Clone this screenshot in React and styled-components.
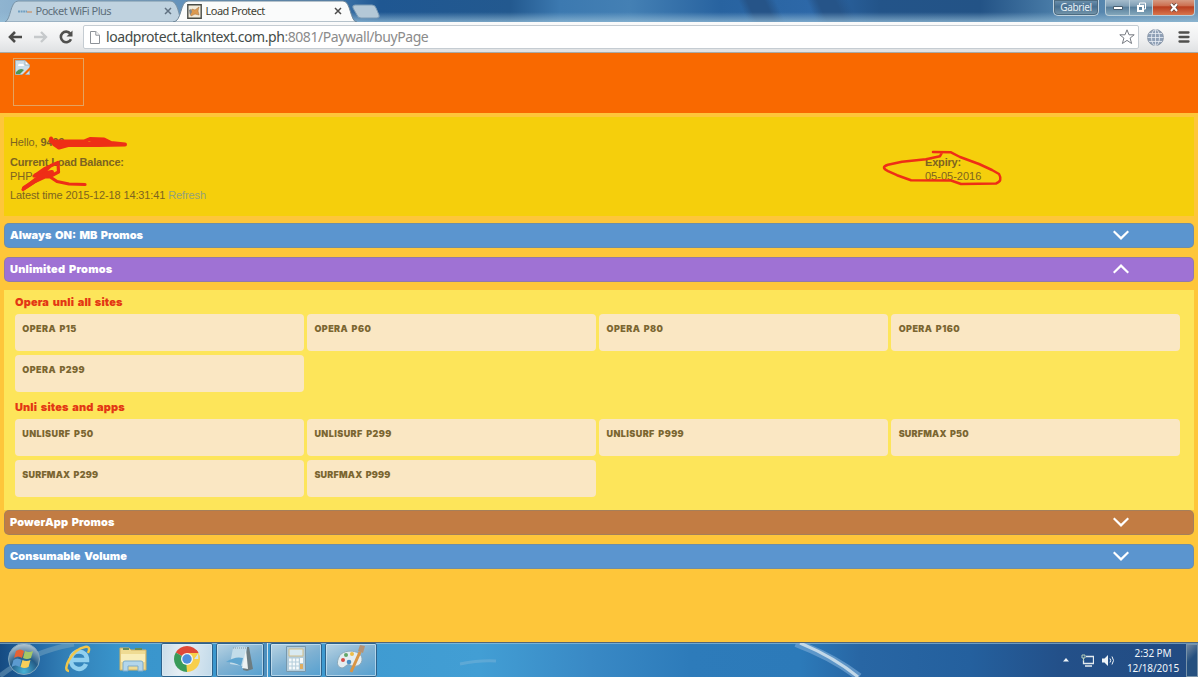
import React from 'react';
import styled, { css, createGlobalStyle } from 'styled-components';

const GlobalStyle = createGlobalStyle`
  * { box-sizing: border-box; }
  body {
    margin: 0;
    overflow: hidden;
    font-family: "Liberation Sans", Arial, sans-serif;
  }
  svg { display: block; flex: none; }
`;

const Screen = styled.div`
  display: flex;
  flex-direction: column;
  width: 1198px;
  height: 677px;
  background: #fec63a;
`;

/* browser */

const TabStrip = styled.header`
  position: relative;
  display: flex;
  height: 22px;
  background:
    linear-gradient(to bottom, transparent 55%, rgba(150, 190, 215, .75) 100%),
    linear-gradient(65deg, transparent 0 678px, #265488 686px 702px, transparent 712px 740px, #265488 750px 766px, transparent 778px),
    linear-gradient(to right, #8fb4d0 0, #3d74a8 340px, #1f5792 380px, #23598f 510px, #3c79b0 560px, #4480b4 630px, #2863a0 720px, #2d68a8 810px, #235489 880px, #235386 980px, #4c7faa 1060px, #6e97b8 1198px);
`;

const TabShape = styled.svg`
  position: absolute;
  left: 0;
  top: 0;
`;

const Tab = styled.div`
  position: relative;
  display: flex;
  align-items: center;
  width: ${({ width }) => width}px;
  height: 22px;
  padding: 0 ${({ end }) => end}px 0 ${({ start }) => start}px;
  font: 11px/22px "Noto Sans", "Open Sans", sans-serif;
  color: ${({ active }) => (active ? '#3f3f35' : '#5d6e7a')};
  svg:last-child { margin-left: auto; }
`;

const TabTitle = styled.span`
  margin-left: ${({ gap }) => gap}px;
  letter-spacing: -.5px;
  white-space: nowrap;
`;

const WindowControls = styled.div`
  display: flex;
  align-items: flex-start;
  margin-left: auto;
  padding-right: 3px;
`;

const UserButton = styled.div`
  width: 46px;
  height: 16px;
  margin-right: 6px;
  border: 1px solid #c0d3df;
  border-top: 0;
  border-radius: 0 0 5px 5px;
  background: linear-gradient(#6f93ae, #476f91 45%, #7798ac);
  box-shadow: inset 0 0 0 1px #4d6b80;
  color: #e8f0f5;
  font: 10px/15px "Noto Sans", sans-serif;
  letter-spacing: -.35px;
  text-align: center;
`;

const WindowButton = styled.div`
  display: flex;
  align-items: center;
  justify-content: center;
  width: ${({ width }) => width}px;
  height: 16px;
  border: 1px solid #b9ced9;
  border-top: 0;
  border-left-width: ${({ first }) => (first ? 1 : 0)}px;
  border-radius: 0 0 ${({ last }) => (last ? 4 : 0)}px ${({ first }) => (first ? 4 : 0)}px;
  background: ${({ last }) => (last
    ? 'linear-gradient(#d69a82, #cc6d4e 40%, #b93d1e 45%, #d8754c)'
    : 'linear-gradient(#a5bccc, #7f9eb5 42%, #577d9a 46%, #83a7bb)')};
`;

const Toolbar = styled.div`
  display: flex;
  align-items: center;
  height: 31px;
  padding: 0 7px 0 8px;
  border-bottom: 1px solid #a9aaa5;
  background: linear-gradient(#fbfbfb, #eeeff0 60%, #dfe1e3);
`;

const Icon = styled.svg`
  margin: 0 ${({ $after = 0 }) => $after}px 0 ${({ $before = 0 }) => $before}px;
`;

const AddressBar = styled.div`
  display: flex;
  align-items: center;
  width: 1056px;
  height: 24px;
  padding: 0 3px 0 6px;
  border: 1px solid #c5ccd2;
  border-radius: 2px;
  background: #fff;
`;

const Url = styled.div`
  flex: 1;
  margin-left: 6px;
  color: #8b8b8b;
  font: 14px/20px "Noto Sans", "Open Sans", sans-serif;
  letter-spacing: -.43px;
  white-space: nowrap;
  b {
    color: #444b48;
    font-weight: 400;
  }
`;

/* page */

const Banner = styled.div`
  height: 60px;
  padding: 5px 13px;
  background: #f96900;
`;

const MissingImage = styled.div`
  width: 71px;
  height: 48px;
  padding: 1px;
  border: 1px solid #e5a35f;
`;

const Page = styled.main`
  flex: 1;
  padding: 4px 4px 0;
`;

const Balance = styled.section`
  position: relative;
  display: flex;
  height: 99px;
  padding: 18px 0 0 6px;
  background: #f5cf0c;
  color: #7d6420;
  font-size: 11px;
  line-height: 14px;
`;

const Account = styled.div`
  width: 915px;
`;

const Line = styled.p`
  margin: 0 0 ${({ gap = 0 }) => gap}px;
  letter-spacing: ${({ spacing = 0 }) => spacing}px;
`;

const Expiry = styled.div`
  padding-top: 20px;
`;

const RefreshLink = styled.a`
  color: #93a17a;
`;

const Markup = styled.svg`
  position: absolute;
  left: 0;
  top: 0;
  fill: none;
  stroke: #ee2e16;
  stroke-linecap: round;
  stroke-linejoin: round;
`;

const tones = {
  blue: '#5b95cf',
  purple: '#9f72d4',
  brown: '#c27c43',
};

const heavy = css`
  font-family: Inter, "Liberation Sans", sans-serif;
  font-weight: 900;
  word-spacing: 1.3px;
`;

const Bar = styled.div`
  ${heavy}
  display: flex;
  align-items: center;
  justify-content: space-between;
  height: 25px;
  margin-top: ${({ gap }) => gap}px;
  padding: 0 64px 1px 5px;
  border: 1px solid rgba(130, 130, 120, .45);
  border-radius: 5px;
  background: ${({ tone }) => tones[tone]};
  color: #fff;
  font-size: 11px;
  span { letter-spacing: ${({ spacing }) => spacing}px; }
`;

const Panel = styled.section`
  height: 220px;
  margin-top: 8px;
  padding: 4px 14px 0 11px;
  background: #fde55a;
`;

const GroupTitle = styled.h2`
  ${heavy}
  height: 20px;
  margin: 0;
  color: #e33714;
  font-size: 11px;
  line-height: 16px;
  letter-spacing: .14px;
`;

const Cards = styled.div`
  display: grid;
  grid-template-columns: repeat(4, 1fr);
  gap: 3.5px;
  margin-bottom: 7.5px;
`;

const Card = styled.div`
  ${heavy}
  height: 37px;
  padding: 8px 7.3px;
  border-radius: 4px;
  background: #fae7c3;
  color: #7b6631;
  font-size: 9px;
  line-height: 13px;
  letter-spacing: ${({ spacing }) => spacing}px;
`;

/* taskbar */

const Taskbar = styled.footer`
  position: relative;
  display: flex;
  align-items: center;
  height: 35px;
  border-top: 1px solid #50667a;
  background: linear-gradient(to right, #164b82 0, #2468a3 35px, #327fb6 65px, #3995cc 120px, #429ed4 480px, #3989c5 590px, #2d7bba 690px, #2c7ab9 800px, #2866a4 860px, #24609e 970px, #235089 1060px, #224b82 1198px);
  box-shadow: inset 0 1px 0 rgba(160, 200, 220, .6);
`;

const Streaks = styled.svg`
  position: absolute;
  left: 0;
  top: 0;
`;

const Launcher = styled.div`
  position: relative;
  display: flex;
  justify-content: center;
  width: ${({ width }) => width}px;
  padding-bottom: 2px;
`;

const TaskButton = styled.div`
  position: relative;
  display: flex;
  align-items: center;
  justify-content: center;
  width: ${({ width }) => width}px;
  height: 34px;
  margin: 0 ${({ gap }) => gap}px 0 ${({ before = 0 }) => before}px;
  padding-bottom: 2px;
  border: 1px solid #d3e4ee;
  border-radius: 2px;
  outline: 1px solid #2d628b;
  outline-offset: -1px;
  box-shadow: inset 0 0 0 1px rgba(220, 238, 248, .6);
  background: ${({ active }) => (active
    ? 'linear-gradient(100deg, #c9dce8, #e5eef4 40%, #c1d9e9)'
    : 'linear-gradient(155deg, #b8d3e3, #7fb1d2 50%, #55a0d0)')};
`;

const StackEdge = styled.div`
  position: relative;
  width: 4px;
  height: 34px;
  margin-right: 2px;
  border-right: 1px solid #d3e4ee;
  background: #4e8fbd;
`;

const Tray = styled.div`
  position: relative;
  display: flex;
  align-items: center;
  height: 100%;
  margin-left: auto;
  color: #f1f6fa;
`;

const Clock = styled.div`
  width: 56px;
  margin: 1px 5px 0 10px;
  font: 10px/15px "Noto Sans", "Open Sans", sans-serif;
  letter-spacing: -.1px;
  text-align: center;
  white-space: nowrap;
`;

const ShowDesktop = styled.div`
  width: 12px;
  height: 33px;
  border: 1px solid #7893a9;
  background: linear-gradient(135deg, #7188a0, #25507f 45%);
`;

const CloseIcon = ({ color }) => (
  <svg width="8" height="8" viewBox="0 0 8 8" stroke={color} strokeWidth="1.5">
    <path d="M1 1l6 6M7 1L1 7" />
  </svg>
);

const Chevron = ({ up }) => (
  <svg width="16" height="10" viewBox="0 0 16 10" fill="none" stroke="#fff" strokeWidth="2.2">
    <path d={up ? 'M.7 8.8L8 1.6l7.3 7.2' : 'M.7 1.2L8 8.4l7.3-7.2'} />
  </svg>
);

const BrowserChrome = () => (
  <>
    <TabStrip>
      <TabShape width="400" height="22" viewBox="0 0 400 22">
        <path d="M5 22C11 20 10 1 18 1h152c6 0 8 7 11 21z" fill="#bfd2df" stroke="#7893a7" />
        <path d="M173 22c9 0 7-21 15-21h155c8 0 7 21 14 21z" fill="#fafbfb" stroke="#71899b" />
        <path d="M353 8q-1-3 2-3h17q3 0 4 3l3 7q1 3-2 3h-16q-3 0-4-3z" fill="#b3c8d7" stroke="#7b9bb5" />
      </TabShape>
      <Tab width={182} start={18} end={10}>
        <svg width="15" height="5" viewBox="0 0 15 5">
          <path d="M0 2.5h9" stroke="#719fc1" strokeWidth="2" strokeDasharray="2 .6" />
          <path d="M9 3h5" stroke="#c99d7d" strokeWidth="1.5" />
        </svg>
        <TabTitle gap={2.5}>Pocket WiFi Plus</TabTitle>
        <CloseIcon color="#607181" />
      </Tab>
      <Tab active width={170} start={5} end={10}>
        <svg width="15" height="15" viewBox="0 0 15 15">
          <path d="M.8.8h13.4v13.4H.8z" fill="#f2ead9" stroke="#494c47" strokeWidth="1.4" />
          <path d="M3 9l2-4 3 1 4-3-1 4 1 4-4-1-4 2z" fill="#dc9a50" stroke="#a4713f" strokeWidth=".5" />
          <path d="M2 6l2-1 1 3-2 3z" fill="#7c8891" />
        </svg>
        <TabTitle gap={3.5}>Load Protect</TabTitle>
        <CloseIcon color="#4c4c4c" />
      </Tab>
      <WindowControls>
        <UserButton>Gabriel</UserButton>
        <WindowButton first width={25}>
          <svg width="10" height="4"><path d="M.5 .5h9v3h-9z" fill="#fff" stroke="#495e70" /></svg>
        </WindowButton>
        <WindowButton width={23}>
          <svg width="11" height="11" viewBox="0 0 11 11" fill="none" stroke="#fff">
            <path d="M3.5 3V1h6v6H8" />
            <path d="M2 4h5v5H2z" strokeWidth="2" />
          </svg>
        </WindowButton>
        <WindowButton last width={42}>
          <svg width="10" height="9" viewBox="0 0 10 9">
            <path d="M2 1l6 7M8 1L2 8" stroke="#67483d" strokeWidth="3.6" />
            <path d="M2 1l6 7M8 1L2 8" stroke="#fff" strokeWidth="2" />
          </svg>
        </WindowButton>
      </WindowControls>
    </TabStrip>
    <Toolbar>
      <Icon $after={12} width="14" height="12" viewBox="0 0 14 12" fill="none" stroke="#4b4b49" strokeWidth="2.6">
        <path d="M14 6H2M7 1L2 6l5 5" />
      </Icon>
      <Icon $after={11} width="14" height="12" viewBox="0 0 14 12" fill="none" stroke="#c6c9cb" strokeWidth="2.3">
        <path d="M0 6h12M7 1l5 5-5 5" />
      </Icon>
      <Icon $after={10} width="14" height="14" viewBox="0 0 14 14">
        <path d="M11.3 3.6A5.3 5.3 0 1 0 12 9.2" fill="none" stroke="#50504e" strokeWidth="2.6" />
        <path d="M13.5 .5v6h-6z" fill="#50504e" />
      </Icon>
      <AddressBar>
        <svg width="10" height="13" viewBox="0 0 10 13" fill="#fff" stroke="#8d9298">
          <path d="M.5.5h5.3l3.7 3.7v8.3h-9z" />
          <path d="M5.8.5v3.7h3.7" />
        </svg>
        <Url><b>loadprotect.talkntext.com.ph</b>:8081/Paywall/buyPage</Url>
        <svg width="16" height="16" viewBox="0 0 16 16" fill="#fff" stroke="#777b82" strokeLinejoin="round">
          <path d="M8 .8l2 5h5.2l-4.1 3.3 1.5 5.4L8 11.4l-4.6 3.1 1.5-5.4L.8 5.8H6z" />
        </svg>
      </AddressBar>
      <Icon $before={8} width="17" height="17" viewBox="0 0 17 17" fill="none" stroke="#e8eef5" strokeWidth=".8">
        <circle cx="8.5" cy="8.5" r="8" fill="#8fa0b6" stroke="#8793a3" />
        <ellipse cx="8.5" cy="8.5" rx="4" ry="8" />
        <path d="M8.5.5v16M.5 8.5h16M2 4.5h13M2 12.5h13" />
      </Icon>
      <Icon $before={14} width="12" height="12" viewBox="0 0 12 12" stroke="#50504e" strokeWidth="2.3" strokeLinecap="round">
        <path d="M1.5 1.5h9M1.5 6h9M1.5 10.5h9" />
      </Icon>
    </Toolbar>
  </>
);

const BalanceBox = () => (
  <Balance>
    <Account>
      <Line gap={6} spacing={-0.1}>Hello, <b>9499</b></Line>
      <Line spacing={-0.2}><b>Current Load Balance:</b></Line>
      <Line gap={5}>PHP 0</Line>
      <Line spacing={-0.12}>Latest time 2015-12-18 14:31:41 <RefreshLink>Refresh</RefreshLink></Line>
    </Account>
    <Expiry>
      <Line spacing={-0.18}><b>Expiry:</b></Line>
      <Line>05-05-2016</Line>
    </Expiry>
    <Markup width="1190" height="99" viewBox="4 117 1190 99">
      <path strokeWidth="4" d="M51 138.5l3 5.5 5 3.5 9-2.500h30l27-.500-14-1.500-7-3.500-14-.500-6 2.500H51l8 3 12-1.500 18 1 12-3.500 8 3-20 1" />
      <path strokeWidth="3.2" d="M58 162.5l.5 9.5-9.500 5-15-1 10-7 14-6.500-7 3-11 10-17 14 12-8 13-6 9 6 12 2.500 16 .500" />
      <path strokeWidth="4" d="M24 188l14-9 8-6 6-1-6 4-10-1" />
      <path strokeWidth="2.5" d="M933 152l18 .3 9 4.700 19 7 13 6 7 4q4 7-3 9.500l-35 .500-10-3.500-40-.300-14-5-9-4q-8-4 0-6.500l14-3 24-2.500 14-3 2-3.500" />
    </Markup>
  </Balance>
);

const PromoBar = ({ title, open, ...props }) => (
  <Bar {...props}>
    <span>{title}</span>
    <Chevron up={open} />
  </Bar>
);

const groups = [
  { title: 'Opera unli all sites', items: ['OPERA P15', 'OPERA P60', 'OPERA P80', 'OPERA P160', 'OPERA P299'] },
  { title: 'Unli sites and apps', items: ['UNLISURF P50', 'UNLISURF P299', 'UNLISURF P999', 'SURFMAX P50', 'SURFMAX P299', 'SURFMAX P999'] },
];

const WindowsTaskbar = () => (
  <Taskbar>
    <Streaks width="1198" height="34" viewBox="0 0 1198 34" fill="none">
      <path d="M0 33Q30 9 74 1" stroke="#83adc5" strokeWidth="5" opacity=".45" />
      <path d="M796 0Q833 14 859 34" stroke="#78a9d5" strokeWidth="8" opacity=".65" />
      <path d="M800 0Q834 14 858 34" stroke="#d4e4ef" strokeWidth="3" opacity=".85" />
      <path d="M460 21q20-4 36-3" stroke="#88bada" strokeWidth="3" opacity=".4" />
    </Streaks>
    <Launcher width={48}>
      <svg width="34" height="34" viewBox="0 0 34 34">
        <defs>
          <radialGradient id="orb" cx=".5" cy=".9" r=".9">
            <stop offset="0" stopColor="#48b4d8" />
            <stop offset=".5" stopColor="#245b86" />
            <stop offset="1" stopColor="#b9cbd6" />
          </radialGradient>
        </defs>
        <circle cx="17" cy="17" r="15.5" fill="url(#orb)" stroke="#7fa5bd" />
        <path d="M9 9q4-3 8 0l-2 7q-4-3-8 0z" fill="#e66235" />
        <path d="M18 9q4 2 8 0l-2 7q-4 2-8 0z" fill="#a6c765" />
        <path d="M6.5 18q4-3 8 0l-2 7q-4-3-8 0z" fill="#5c9bd0" />
        <path d="M15.5 18q4 2 8 0l-2 7q-4 2-8 0z" fill="#f7cf59" />
      </svg>
    </Launcher>
    <Launcher width={60}>
      <svg width="28" height="28" viewBox="0 0 28 28" fill="none">
        <path d="M8 15h15c0-11-15-11-16-1-1 11 12 13 15 5" stroke="#90d0ef" strokeWidth="4.5" />
        <path d="M5 26C-3 26 8 4 21 2c6-1 4 4 3 6" stroke="#f0c64b" strokeWidth="2.5" />
      </svg>
    </Launcher>
    <Launcher width={50}>
      <svg width="28" height="26" viewBox="0 0 28 26">
        <path d="M1 2h9l2 2h15v20H1z" fill="#efdb93" stroke="#d1b265" />
        <path d="M4 3h6M16 3h7" stroke="#698e58" strokeWidth="2" />
        <path d="M2 8h24v8H2z" fill="#f9edb9" />
        <path d="M4 25v-8q0-2 2-2h16q2 0 2 2v8h-5v-5h-10v5z" fill="#b3d6eb" stroke="#7eabc9" />
      </svg>
    </Launcher>
    <TaskButton active width={52} gap={3} before={3}>
      <svg width="26" height="26" viewBox="0 0 26 26">
        <path d="M13 13L1.75 6.5A13 13 0 0 1 24.25 6.5z" fill="#df4937" />
        <path d="M13 13h11.25V6.5A13 13 0 0 1 13 26z" fill="#f7cf4b" />
        <path d="M13 13v13A13 13 0 0 1 1.75 6.5z" fill="#399b59" />
        <path d="M13 7h11.5L18 16l-5 10-.5-6z" fill="#f7cf4b" />
        <path d="M13 7h11.5a13 13 0 0 0-2-3z" fill="#df4937" />
        <circle cx="13" cy="13" r="6" fill="#f4f6f6" />
        <circle cx="13" cy="13" r="4.7" fill="#4d8fdc" />
      </svg>
    </TaskButton>
    <TaskButton width={48} gap={0}>
      <svg width="28" height="26" viewBox="0 0 28 26">
        <path d="M21 1h2l4 22-6 2-4-1z" fill="#6d7c81" />
        <path d="M7 2q7-3 14-1l-4 19-13-2z" fill="#c3dce9" />
        <path d="M0 16q9-6 17-4l-2 8q-7-4-15-4z" fill="#5fa5d0" />
        <path d="M20 3l-4 19 6 1z" fill="#edf2f2" />
        <path d="M7 2h14" stroke="#8499a4" strokeDasharray="1 1" />
      </svg>
    </TaskButton>
    <StackEdge />
    <TaskButton width={52} gap={3}>
      <svg width="20" height="26" viewBox="0 0 20 26">
        <path d="M.5.5h19v25H.5z" fill="#b4cddb" stroke="#7798ad" />
        <path d="M3 3h14v7H3z" fill="#d9eaf1" stroke="#d3bf8a" />
        <path d="M3 14h10M3 18h10M3 22h10" stroke="#f6fafb" strokeWidth="3" strokeDasharray="2.6 1" />
        <path d="M15.5 12v5" stroke="#f7fafb" strokeWidth="3" />
        <path d="M15.5 18v5" stroke="#e1ae62" strokeWidth="3" />
      </svg>
    </TaskButton>
    <TaskButton width={52} gap={0}>
      <svg width="29" height="28" viewBox="0 0 29 28">
        <path d="M2 12C5 4 23 4 25 13c1 8-8 10-12 7-3-2-5 3-8 3-6-1-5-7-3-11z" fill="#e4edf0" stroke="#8aa8b9" />
        <circle cx="6" cy="15" r="2" fill="#d64d47" />
        <circle cx="9" cy="10" r="2" fill="#62a66a" />
        <circle cx="15" cy="9" r="2" fill="#edbd48" />
        <circle cx="12" cy="17" r="2.3" fill="#4a8fc4" />
        <path d="M23 7l-9 20" stroke="#d99545" strokeWidth="3" />
        <path d="M21 6l2-6 5 1-2 7z" fill="#b69273" />
      </svg>
    </TaskButton>
    <Tray>
      <svg width="6" height="4" viewBox="0 0 6 4"><path d="M0 3.5L3 0l3 3.5z" fill="#eef4f8" /></svg>
      <Icon $before={12} width="13" height="13" viewBox="0 0 13 13" fill="none" stroke="#e4ebef">
        <path d="M5 2.5h7.5v7h-10V6M4 12h7" strokeWidth="1.3" />
        <path d="M1 1h3v3H1zM2.5 4v3" stroke="#b8d0b9" />
      </Icon>
      <Icon $before={8} width="13" height="13" viewBox="0 0 13 13" fill="none" stroke="#eef4f8">
        <path d="M0 4.5h2.5L6 1v11L2.5 8.500H0z" fill="#eef4f8" stroke="none" />
        <path d="M8 4.5q1.500 2 0 4M10 2.500q3 4 0 8" />
      </Icon>
      <Clock>2:32 PM<br />12/18/2015</Clock>
      <ShowDesktop />
    </Tray>
  </Taskbar>
);

export default function App() {
  return (
    <Screen>
      <GlobalStyle />
      <BrowserChrome />
      <Banner>
        <MissingImage>
          <svg width="15" height="15" viewBox="0 0 15 15">
            <path d="M.5.5H10L14.5 5v9.500H.5z" fill="#cbdde9" stroke="#a5b4ba" />
            <path d="M3 6q0-3 3-2 3-1 3 2z" fill="#fff" />
            <path d="M1 14v-2q4-5 8-2l-4 4z" fill="#4d9654" />
            <path d="M7 15l8-8v3l-5 5z" fill="#f96900" />
            <path d="M10 1v4h4" fill="#fff" stroke="#a5b4ba" />
          </svg>
        </MissingImage>
      </Banner>
      <Page>
        <BalanceBox />
        <PromoBar title="Always ON: MB Promos" tone="blue" gap={7} spacing={0} />
        <PromoBar title="Unlimited Promos" tone="purple" gap={9} spacing={0.22} open />
        <Panel>
          {groups.map(({ title, items }) => (
            <React.Fragment key={title}>
              <GroupTitle>{title}</GroupTitle>
              <Cards>
                {items.map((item) => (
                  <Card key={item} spacing={item.startsWith('SURFMAX') ? 0.2 : 0.42}>{item}</Card>
                ))}
              </Cards>
            </React.Fragment>
          ))}
        </Panel>
        <PromoBar title="PowerApp Promos" tone="brown" gap={0} spacing={0.1} />
        <PromoBar title="Consumable Volume" tone="blue" gap={9} spacing={0.08} />
      </Page>
      <WindowsTaskbar />
    </Screen>
  );
}
